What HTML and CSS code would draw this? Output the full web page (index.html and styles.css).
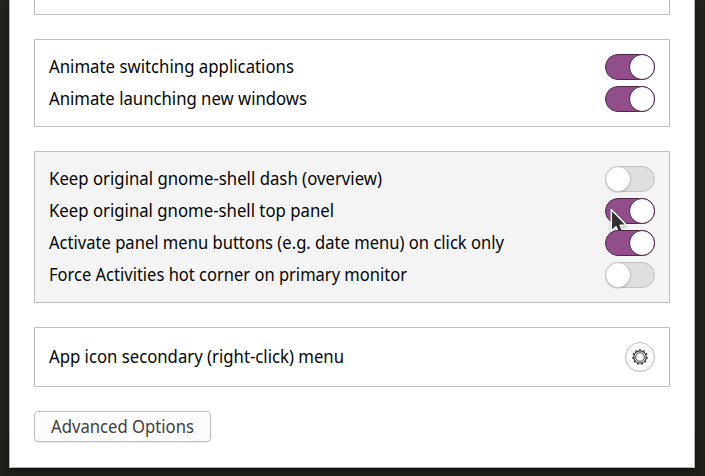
FILE: index.html
```html
<!DOCTYPE html>
<html lang="en">
<head>
<meta charset="utf-8">
<title>Preferences</title>
<link rel="stylesheet" href="styles.css">
</head>
<body>
<main class="window">
  <section class="group group-end"></section>
  <section class="group">
    <div class="row"><svg class="label" width="540" height="26"><text x="0" y="19" textLength="245" lengthAdjust="spacingAndGlyphs">Animate switching applications</text></svg><span class="switch on"></span></div>
    <div class="row"><svg class="label" width="540" height="26"><text x="0" y="19" textLength="258" lengthAdjust="spacingAndGlyphs">Animate launching new windows</text></svg><span class="switch on"></span></div>
  </section>
  <section class="group hovered">
    <div class="row"><svg class="label" width="540" height="26"><text x="0" y="19" textLength="333" lengthAdjust="spacingAndGlyphs">Keep original gnome-shell dash (overview)</text></svg><span class="switch"></span></div>
    <div class="row"><svg class="label" width="540" height="26"><text x="0" y="19" textLength="285" lengthAdjust="spacingAndGlyphs">Keep original gnome-shell top panel</text></svg><span class="switch on"><svg class="pointer" width="20" height="30" viewBox="0 0 20 30"><path d="M1.3 1.5V23L6 18.8L9.3 26L13.3 24.2L10.2 17.2H16.5Z"/></svg></span></div>
    <div class="row"><svg class="label" width="540" height="26"><text x="0" y="19" textLength="455" lengthAdjust="spacingAndGlyphs">Activate panel menu buttons (e.g. date menu) on click only</text></svg><span class="switch on"></span></div>
    <div class="row"><svg class="label" width="540" height="26"><text x="0" y="19" textLength="358" lengthAdjust="spacingAndGlyphs">Force Activities hot corner on primary monitor</text></svg><span class="switch"></span></div>
  </section>
  <section class="group">
    <div class="row row-menu"><svg class="label" width="540" height="26"><text x="0" y="19" textLength="295" lengthAdjust="spacingAndGlyphs">App icon secondary (right-click) menu</text></svg>
      <button class="round" aria-label="Settings"><svg width="18" height="18" viewBox="-9 -9 18 18"><circle class="ring" r="6.2"/><circle class="ring-inner" r="4.3"/><circle class="teeth" r="7.2" pathLength="110"/></svg></button>
    </div>
  </section>
  <button class="advanced"><svg class="label" width="175" height="26"><text x="16" y="18.5" textLength="143" lengthAdjust="spacingAndGlyphs">Advanced Options</text></svg></button>
</main>
</body>
</html>
```
FILE: styles.css
```css
*, *::before { box-sizing: border-box; }
body {
  margin: 0;
  height: 476px;
  overflow: hidden;
  background: linear-gradient(#23241f 0, #23241f 90%, #1e1f1a 100%);
  font-family: "Noto Sans", sans-serif;
}
.window {
  width: 686px;
  height: 468px;
  margin: 0 auto 0 9px;
  padding: 0 24px;
  background: #fff;
  border: 1px solid #b5b5b2;
  border-top: 0;
  box-shadow: 0 2px 7px rgba(0, 0, 0, .5);
}
.group {
  margin-bottom: 24px;
  padding: 11px 14px;
  border: 1px solid #bfbfbf;
  background: #fff;
}
.group-end { height: 15px; padding: 0; border-top: 0; }
.hovered { background: #f4f4f4; }
.row {
  display: flex;
  align-items: center;
  justify-content: space-between;
  height: 32px;
}
.row-menu { height: 36px; }
.label {
  display: block;
  overflow: visible;
  fill: #050505;
  font-family: "Noto Sans", sans-serif;
  font-size: 18.6px;
}
.switch {
  position: relative;
  width: 50px;
  height: 26px;
  border: 1px solid #c1c1c1;
  border-radius: 13px;
  background: #dedede;
}
.switch::before {
  content: "";
  position: absolute;
  left: -1px;
  top: -1px;
  width: 26px;
  height: 26px;
  border: 1px solid #c1c1c1;
  border-radius: 50%;
  background: #fff;
  box-shadow: 0 1px 1px rgba(0, 0, 0, .12);
}
.switch.on { background: #924d8b; border-color: #51264d; }
.switch.on::before { left: 23px; border-color: #51264d; box-shadow: none; }
.pointer { position: absolute; left: 4px; top: 9px; overflow: visible; filter: drop-shadow(0 1px 1px rgba(0, 0, 0, .3)); }
.pointer path { fill: #303030; stroke: #fff; stroke-width: 1.5; stroke-linejoin: round; }
.round {
  display: grid;
  place-items: center;
  width: 30px;
  height: 30px;
  padding: 0;
  border: 1px solid #c2c2c2;
  border-radius: 50%;
  background: #fafafa;
  box-shadow: 0 1px 1px rgba(0, 0, 0, .08);
}
.round circle { fill: none; stroke: #3c3c3c; }
.round .ring { stroke-width: 1.3; }
.round .ring-inner { stroke-width: .9; }
.round .teeth { stroke-width: 1.3; stroke-dasharray: 4.5 5.5; stroke-dashoffset: 2.25; transform: rotate(-90deg); }
.advanced {
  display: flex;
  align-items: center;
  width: 177px;
  height: 31px;
  padding: 0;
  border: 1px solid #bfbfbf;
  border-radius: 4px;
  background: #fcfcfc;
  box-shadow: 0 1px 1px rgba(0, 0, 0, .08);
}
.advanced .label { fill: #414141; }
```
